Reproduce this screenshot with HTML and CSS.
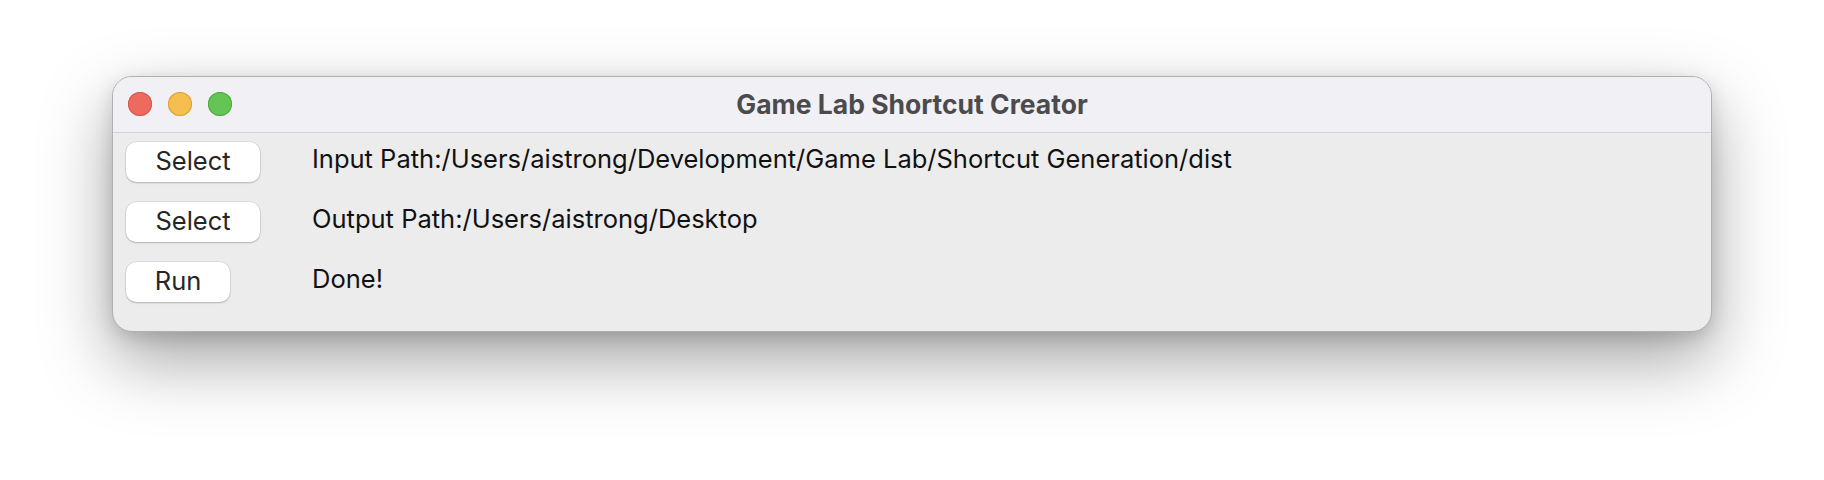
FILE: index.html
```html
<!DOCTYPE html>
<html lang="en">
<head>
<meta charset="utf-8">
<title>Game Lab Shortcut Creator</title>
<link rel="stylesheet" href="styles.css">
</head>
<body>
<div class="window">
  <div class="titlebar">
    <div class="lights">
      <span class="light red"></span>
      <span class="light yellow"></span>
      <span class="light green"></span>
    </div>
    <div class="title">Game Lab Shortcut Creator</div>
  </div>
  <div class="content">
    <div class="row">
      <button class="btn btn-select">Select</button>
      <div class="label">Input Path:/Users/aistrong/Development/Game Lab/Shortcut Generation/dist</div>
    </div>
    <div class="row">
      <button class="btn btn-select">Select</button>
      <div class="label">Output Path:/Users/aistrong/Desktop</div>
    </div>
    <div class="row">
      <button class="btn btn-run">Run</button>
      <div class="label">Done!</div>
    </div>
  </div>
</div>
</body>
</html>
```

FILE: styles.css
```css
* { box-sizing: border-box; }
html, body { margin: 0; }
html { background: #ffffff; }
body {
  background: #ffffff;
  min-height: 480px;
  padding: 76px 112px 0 112px;
  font-family: Inter, "Noto Sans", "Liberation Sans", sans-serif;
}
.window {
  width: 1600px;
  height: 256px;
  border: 1px solid #b0b0b2;
  border-radius: 20px;
  overflow: hidden;
  background: #ececec;
  box-shadow: 0 28px 70px rgba(0,0,0,0.36), 0 6px 18px rgba(0,0,0,0.14);
  display: flex;
  flex-direction: column;
}
.titlebar {
  position: relative;
  height: 56px;
  flex: none;
  background: #f1f0f5;
  border-bottom: 1px solid #d2d2d4;
  display: flex;
  align-items: center;
  padding: 0 0 1px 15px;
}
.lights {
  display: flex;
  gap: 16px;
}
.light {
  width: 24px;
  height: 24px;
  border-radius: 50%;
  display: block;
}
.red { background: #ee6a5f; box-shadow: inset 0 0 0 1px #d6574c; }
.yellow { background: #f5be4f; box-shadow: inset 0 0 0 1px #d9a23b; }
.green { background: #62c554; box-shadow: inset 0 0 0 1px #4fa941; }
.title {
  position: absolute;
  left: 0;
  right: 0;
  top: 0;
  bottom: 0;
  display: flex;
  align-items: center;
  justify-content: center;
  font-weight: 700;
  font-size: 26.5px;
  color: #4b4b4e;
  padding-bottom: 2px;
}
.content {
  flex: 1;
  padding: 9px 13px 0 13px;
  display: flex;
  flex-direction: column;
  gap: 20px;
}
.row {
  display: grid;
  grid-template-columns: 186px 1fr;
  align-items: start;
  height: 40px;
}
.btn {
  height: 40px;
  border: none;
  border-radius: 10px;
  background: #ffffff;
  box-shadow: 0 0 0 0.5px rgba(0,0,0,0.12), 0 1px 2px rgba(0,0,0,0.2);
  font-family: inherit;
  font-size: 25.5px;
  color: #262626;
  padding: 0 0 3px 0;
  justify-self: start;
}
.btn-select { width: 134px; }
.btn-run { width: 104px; }
.label {
  font-size: 25.5px;
  line-height: 34px;
  color: #111111;
  white-space: nowrap;
}
```
